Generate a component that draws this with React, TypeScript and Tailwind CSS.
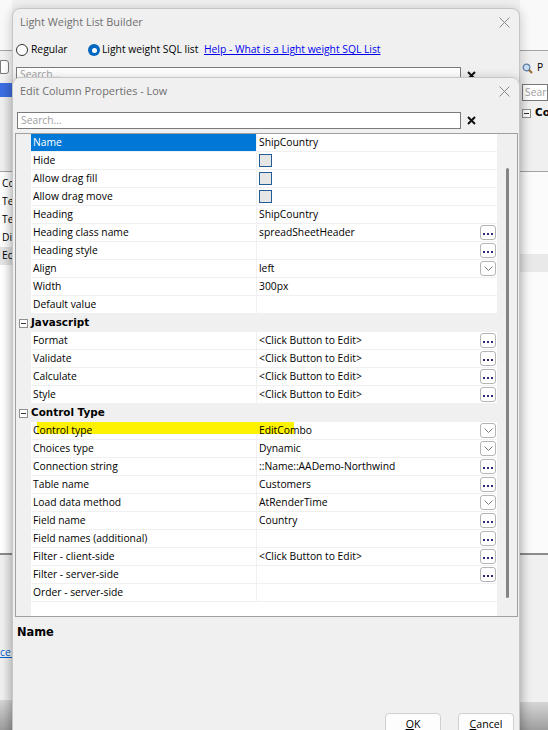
import React from 'react';

type Btn = 'dots' | 'drop';

interface PropRow {
  cat?: boolean;
  name: string;
  value?: string;
  check?: boolean;
  btn?: Btn;
  selected?: boolean;
  highlight?: boolean;
}

const rows: PropRow[] = [
  { name: 'Name', value: 'ShipCountry', selected: true },
  { name: 'Hide', check: true },
  { name: 'Allow drag fill', check: true },
  { name: 'Allow drag move', check: true },
  { name: 'Heading', value: 'ShipCountry' },
  { name: 'Heading class name', value: 'spreadSheetHeader', btn: 'dots' },
  { name: 'Heading style', btn: 'dots' },
  { name: 'Align', value: 'left', btn: 'drop' },
  { name: 'Width', value: '300px' },
  { name: 'Default value' },
  { cat: true, name: 'Javascript' },
  { name: 'Format', value: '<Click Button to Edit>', btn: 'dots' },
  { name: 'Validate', value: '<Click Button to Edit>', btn: 'dots' },
  { name: 'Calculate', value: '<Click Button to Edit>', btn: 'dots' },
  { name: 'Style', value: '<Click Button to Edit>', btn: 'dots' },
  { cat: true, name: 'Control Type' },
  { name: 'Control type', value: 'EditCombo', btn: 'drop', highlight: true },
  { name: 'Choices type', value: 'Dynamic', btn: 'drop' },
  { name: 'Connection string', value: '::Name::AADemo-Northwind', btn: 'dots' },
  { name: 'Table name', value: 'Customers', btn: 'dots' },
  { name: 'Load data method', value: 'AtRenderTime', btn: 'drop' },
  { name: 'Field name', value: 'Country', btn: 'dots' },
  { name: 'Field names (additional)', btn: 'dots' },
  { name: 'Filter - client-side', value: '<Click Button to Edit>', btn: 'dots' },
  { name: 'Filter - server-side', btn: 'dots' },
  { name: 'Order - server-side' },
];

function CloseIcon() {
  return (
    <svg width="11" height="11" viewBox="0 0 11 11" className="shrink-0">
      <path d="M0.5 0.5 L10.5 10.5 M10.5 0.5 L0.5 10.5" stroke="#8a8a8a" strokeWidth="1" fill="none" />
    </svg>
  );
}

function ClearIcon() {
  return (
    <svg width="9" height="9" viewBox="0 0 9 9" className="shrink-0">
      <path d="M1 1 L8 8 M8 1 L1 8" stroke="#111" strokeWidth="2" fill="none" />
    </svg>
  );
}

function MinusBox() {
  return (
    <div className="w-[9px] h-[9px] border border-[#8f8f8f] bg-white flex items-center justify-center shrink-0">
      <div className="w-[5px] h-px bg-[#333]" />
    </div>
  );
}

function CellButton({ kind }: { kind: Btn }) {
  return (
    <div className="absolute right-[1px] top-[1px] w-[16px] h-[15px] rounded-[3px] border border-[#b5b5b5] bg-white flex items-center justify-center">
      {kind === 'dots' ? (
        <div className="flex gap-[2px] mt-[2px]">
          <div className="w-[2px] h-[2px] bg-[#2a2a78]" />
          <div className="w-[2px] h-[2px] bg-[#2a2a78]" />
          <div className="w-[2px] h-[2px] bg-[#2a2a78]" />
        </div>
      ) : (
        <svg width="9" height="5" viewBox="0 0 9 5">
          <path d="M0.5 0.5 L4.5 4.5 L8.5 0.5" stroke="#7a7a7a" strokeWidth="1" fill="none" />
        </svg>
      )}
    </div>
  );
}

function GridRow({ row }: { row: PropRow }) {
  if (row.cat) {
    return (
      <div className="h-[18px] flex items-center bg-[#f0f0f0] pl-[3px]">
        <MinusBox />
        <span className="ml-[3px] font-['DejaVu_Sans',sans-serif] font-bold text-[10.4px]">{row.name}</span>
      </div>
    );
  }
  return (
    <div className="relative h-[18px] flex">
      <div className="w-[15px] bg-[#f0f0f0] shrink-0" />
      {row.highlight && <div className="absolute left-[21px] top-0 w-[257px] h-[12px] bg-[#fff200] z-10" />}
      <div
        className={`w-[225px] shrink-0 border-b border-[#f0f0f0] flex items-center pl-[2px] ${
          row.selected ? 'bg-[#0078d7] text-white' : 'bg-white'
        }`}
      >
        <span className="relative z-20">{row.name}</span>
      </div>
      <div className="relative flex-1 border-b border-l border-[#f0f0f0] bg-white flex items-center pl-[2px]">
        {row.check && <div className="w-[13px] h-[13px] border border-[#245d96] bg-[#e6e6e6]" />}
        {row.value && <span className="relative z-20">{row.value}</span>}
        {row.btn && <CellButton kind={row.btn} />}
      </div>
    </div>
  );
}

function Backdrop() {
  return (
    <div className="absolute inset-0 flex">
      <div className="w-[12px] flex flex-col overflow-hidden whitespace-nowrap">
        <div className="h-[51px] bg-[#f9f9f9] border-b border-[#a3a3a3]" />
        <div className="h-[121px] bg-[#f0f0f0] border-b border-[#a3a3a3] pt-[9px]">
          <div className="w-[9px] h-[14px] border border-[#7a7a7a] rounded-r-[3px] bg-white" />
          <div className="mt-[9px] h-[14px] bg-[#3d6fe4]" />
        </div>
        <div className="h-[381px] bg-white pt-[3px]">
          {['Co', 'Te', 'Te', 'Di', 'Ec'].map((t, i) => (
            <div key={i} className={`h-[18px] flex items-center pl-[2px] ${i === 4 ? 'bg-[#e4e4e4]' : ''}`}>
              {t}
            </div>
          ))}
        </div>
        <div className="h-[2px] bg-[#8c8c8c]" />
        <div className="h-[145px] bg-[#f0f0f0] pt-[90px]">
          <span className="text-[#0066cc] underline">ce .</span>
        </div>
        <div className="flex-1 bg-linear-to-b from-[#d6d6d6] to-[#9e9e9e]" />
      </div>
      <div className="flex-1" />
      <div className="w-[28px] flex flex-col overflow-hidden">
        <div className="h-[51px] bg-[#f9f9f9] border-b border-[#a3a3a3]" />
        <div className="h-[121px] bg-[#f0f0f0] border-b border-[#a3a3a3] pl-[2px]">
          <div className="mt-[11px] h-[12px] flex items-center gap-[4px] whitespace-nowrap">
            <svg width="11" height="11" viewBox="0 0 11 11" className="shrink-0">
              <circle cx="4.5" cy="4.5" r="3.3" fill="#cfe3f7" stroke="#5b7fa8" strokeWidth="1.2" />
              <path d="M7 7 L10 10" stroke="#9a6a2a" strokeWidth="2" />
            </svg>
            <span>P</span>
          </div>
          <div className="mt-[10px] h-[17px] border border-[#7a7a7a] bg-white pl-[2px] text-[#a0a0a0] flex items-center overflow-hidden whitespace-nowrap">
            Sear
          </div>
          <div className="mt-[6px] h-[12px] flex items-center gap-[4px] whitespace-nowrap">
            <MinusBox />
            <span className="font-['DejaVu_Sans',sans-serif] font-bold text-[10.4px]">Co</span>
          </div>
        </div>
        <div className="h-[82px] bg-[#fbfbfb]" />
        <div className="h-[18px] bg-[#e9e9e9]" />
        <div className="h-[281px] bg-[#fbfbfb]" />
        <div className="h-[2px] bg-[#8c8c8c]" />
        <div className="h-[147px] bg-[#f0f0f0]" />
        <div className="flex-1 bg-linear-to-b from-[#d6d6d6] to-[#9e9e9e]" />
      </div>
    </div>
  );
}

export default function App() {
  return (
    <div className="relative w-[548px] h-[730px] overflow-hidden bg-[#f0f0f0] text-black text-[10.3px] font-['Open_Sans',sans-serif]">
      <Backdrop />

      {/* Outer dialog */}
      <div className="absolute left-[12px] top-[8px] w-[508px] h-[760px] rounded-t-[8px] border border-[#c6c6c6] bg-[#f0f0f0] shadow-[0_2px_12px_rgba(0,0,0,0.22)]">
        <div className="h-[27px] flex items-center justify-between pl-[7px] pr-[9px]">
          <span className="text-[10.9px] text-[#6f6f6f]">Light Weight List Builder</span>
          <CloseIcon />
        </div>
        <div className="mt-[6px] h-[16px] flex items-center pl-[3px] whitespace-nowrap">
          <div className="w-[72px] flex items-center">
            <div className="w-[12px] h-[12px] rounded-full border border-[#333] bg-white" />
            <span className="ml-[3px]">Regular</span>
          </div>
          <div className="w-[116px] flex items-center">
            <div className="w-[12px] h-[12px] rounded-full bg-[#0067c0] flex items-center justify-center">
              <div className="w-[5px] h-[5px] rounded-full bg-white" />
            </div>
            <span className="ml-[2px]">Light weight SQL list</span>
          </div>
          <span className="text-[#0000ee] underline">Help - What is a Light weight SQL List</span>
        </div>
        <div className="mt-[9px] flex items-center pl-[3px] gap-[6px]">
          <div className="w-[445px] h-[16px] border border-[#7a7a7a] bg-white pl-[3px] text-[#a0a0a0] flex items-center">
            Search...
          </div>
          <ClearIcon />
        </div>
      </div>

      {/* Inner dialog */}
      <div className="absolute left-[12px] top-[77px] w-[508px] h-[700px] rounded-t-[8px] border border-[#c6c6c6] bg-[#f0f0f0] shadow-[0_2px_12px_rgba(0,0,0,0.22)]">
        <div className="h-[27px] flex items-center justify-between pl-[7px] pr-[9px]">
          <span className="text-[10.9px] text-[#6f6f6f]">Edit Column Properties - Low</span>
          <CloseIcon />
        </div>
        <div className="mt-[7px] flex items-center pl-[4px] gap-[6px]">
          <div className="w-[444px] h-[17px] border border-[#7a7a7a] bg-white pl-[3px] text-[#a0a0a0] flex items-center">
            Search...
          </div>
          <ClearIcon />
        </div>

        {/* Property grid */}
        <div className="mt-[4px] ml-[2px] w-[503px] h-[484px] border border-[#a0a0a0] flex">
          <div className="w-[481px] flex flex-col bg-white">
            {rows.map((r, i) => (
              <GridRow key={i} row={r} />
            ))}
            <div className="flex-1 flex">
              <div className="w-[15px] bg-[#f0f0f0]" />
              <div className="flex-1 bg-white" />
            </div>
          </div>
          <div className="flex-1 bg-[#f0f0f0] pt-[34px] pl-[9px]">
            <div className="w-[3px] h-[430px] rounded-full bg-[#858585]" />
          </div>
        </div>

        <div className="mt-[8px] ml-[4px] h-[16px] flex items-center font-['DejaVu_Sans',sans-serif] font-bold text-[11.4px]">
          Name
        </div>

        <div className="mt-[72px] flex justify-end gap-[17px] pr-[5px]">
          <div className="w-[56px] h-[24px] rounded-[4px] border border-[#d0d0d0] bg-[#fdfdfd] flex items-center justify-center text-[10.6px]">
            <span><span className="underline">O</span>K</span>
          </div>
          <div className="w-[56px] h-[24px] rounded-[4px] border border-[#d0d0d0] bg-[#fdfdfd] flex items-center justify-center text-[10.6px]">
            <span><span className="underline">C</span>ancel</span>
          </div>
        </div>
      </div>
    </div>
  );
}
